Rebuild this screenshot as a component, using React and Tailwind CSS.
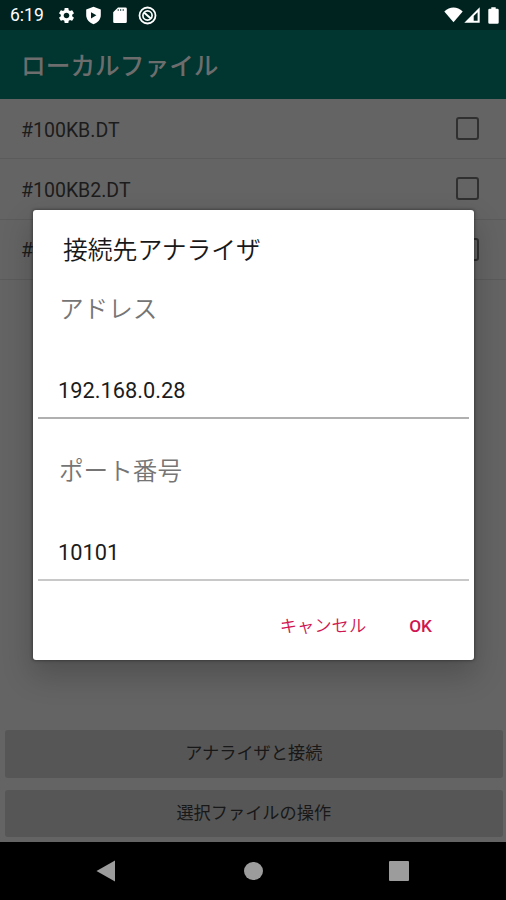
import { MdSettings } from 'react-icons/md';

const files = ['#100KB.DT', '#100KB2.DT', '#'];

function StatusBar() {
  return (
    <div className="flex h-[30px] items-center bg-[#00231f] pr-[7px] pl-[10px] text-white">
      <span className="w-[47px] pt-[2px] text-[17.5px] leading-none">6:19</span>
      <MdSettings className="size-[19px] shrink-0" />
      <svg className="ml-[8px] size-[19px] shrink-0" viewBox="0 0 19 19" fill="none">
        <path d="M9.5 0.8 16.8 3.6V9c0 4.5-3 7.7-7.3 9.2C5.2 16.7 2.2 13.5 2.2 9V3.6z" fill="currentColor" />
        <path d="M7 6.2v6.2l5.4-3.1z" fill="#00231f" />
      </svg>
      <svg className="ml-[10px] h-[17px] w-[14px] shrink-0" viewBox="0 0 14 17">
        <path d="M5 .5h7.5q1.3 0 1.3 1.3v13q0 1.3-1.3 1.3H1.5Q.2 16.1.2 14.8V5.3z" fill="currentColor" />
        <path d="M5.2 2v2M7.7 2v2M10.2 2v2" stroke="#00231f" strokeWidth="0.8" />
      </svg>
      <svg className="ml-[11px] size-[19px] shrink-0" viewBox="0 0 19 19" fill="none" stroke="currentColor">
        <circle cx="9.5" cy="9.5" r="8" strokeWidth="1.8" />
        <circle cx="9.5" cy="9.5" r="4.6" strokeWidth="1.7" />
        <path d="M6 6.5l6.8 6" strokeWidth="2" />
      </svg>
      <svg className="ml-auto h-[16px] w-[19px]" viewBox="0 0 19 16">
        <path d="M9.5 15.3.3 4.4Q4.5.6 9.5.6t9.2 3.8z" fill="currentColor" />
      </svg>
      <svg className="ml-[1px] size-[16px]" viewBox="0 0 16 16">
        <path d="M15.7.2v15.6H.3zM13.6 5.2 9.7 9v4.7h3.9z" fill="currentColor" fillRule="evenodd" />
      </svg>
      <svg className="ml-[8px] h-[17px] w-[11px]" viewBox="0 0 11 17">
        <path d="M3.3.2h4.4v1.6h1.7q1.3 0 1.3 1.3v12.4q0 1.3-1.3 1.3H1.6Q.3 16.8.3 15.5V3.1q0-1.3 1.3-1.3h1.7z" fill="currentColor" />
      </svg>
    </div>
  );
}

function FileRow({ name }) {
  return (
    <div className="flex h-[60.3px] items-center justify-between border-b border-[#5b5b5b] pr-[27px] pl-[21px]">
      <span className="pt-[3px] text-[19.5px] text-[#1c1c1c]">{name}</span>
      <span className="size-[23px] rounded-[3px] border-2 border-[#303030]" />
    </div>
  );
}

function Field({ label, value, line }) {
  return (
    <div className={`flex h-[162px] flex-col border-b-2 px-[20px] ${line}`}>
      <label className="mt-[35px] pl-px text-[24.6px] leading-[36px] font-[350] text-[#757575]">{label}</label>
      <span className="mt-auto mb-[11px] text-[21.8px] leading-[30px] text-[#1c1c1c]">{value}</span>
    </div>
  );
}

function ConnectDialog() {
  return (
    <div className="absolute top-[210px] left-[33px] flex h-[450px] w-[441px] flex-col rounded-[3px] bg-white shadow-[0_14px_30px_2px_rgba(0,0,0,0.2),0_0_3px_1px_rgba(0,0,0,0.3)]">
      <h2 className="mt-[23px] pl-[30px] text-[24.8px] leading-[36px] font-[350] text-[#181818]">接続先アナライザ</h2>
      <div className="-mt-[12px] px-[5px]">
        <Field label="アドレス" value="192.168.0.28" line="border-[#b0b0b0]" />
        <Field label="ポート番号" value="10101" line="border-[#c8c8c8]" />
      </div>
      <div className="mt-[30px] flex justify-end gap-[43px] pr-[42px] text-[17.3px] leading-[30px] text-[#d01650]">
        <button className="font-[350]">キャンセル</button>
        <button className="font-medium">OK</button>
      </div>
    </div>
  );
}

export default function App() {
  return (
    <div className="relative flex h-[900px] w-[506px] flex-col overflow-hidden bg-[#646464] font-['Roboto','Noto_Sans_CJK_JP',sans-serif]">
      <StatusBar />
      <header className="flex h-[69px] items-center bg-[#003530] pt-[4px] pl-[21px]">
        <h1 className="text-[24.7px] font-medium text-[#6d6d6d]">ローカルファイル</h1>
      </header>
      <main className="flex-1">
        {files.map(name => (
          <FileRow key={name} name={name} />
        ))}
      </main>
      <div className="flex flex-col gap-[12px] pr-[3px] pb-[5px] pl-[4.5px] text-[17.2px] text-[#181818]">
        <button className="h-[47.5px] rounded-[3px] bg-[#565656]">アナライザと接続</button>
        <button className="h-[47.5px] rounded-[3px] bg-[#565656] pt-px">選択ファイルの操作</button>
      </div>
      <nav className="flex h-[58px] items-center justify-between bg-black pr-[97px] pl-[96px] text-[#9c9c9c]">
        <svg className="h-[22px] w-[19px]" viewBox="0 0 19 22" fill="currentColor">
          <path d="M.5 11 19 .5v21z" />
        </svg>
        <span className="ml-[3px] size-[18.5px] rounded-full bg-[#9c9c9c]" />
        <span className="size-[20px] rounded-[1px] bg-[#9c9c9c]" />
      </nav>
      <ConnectDialog />
    </div>
  );
}
